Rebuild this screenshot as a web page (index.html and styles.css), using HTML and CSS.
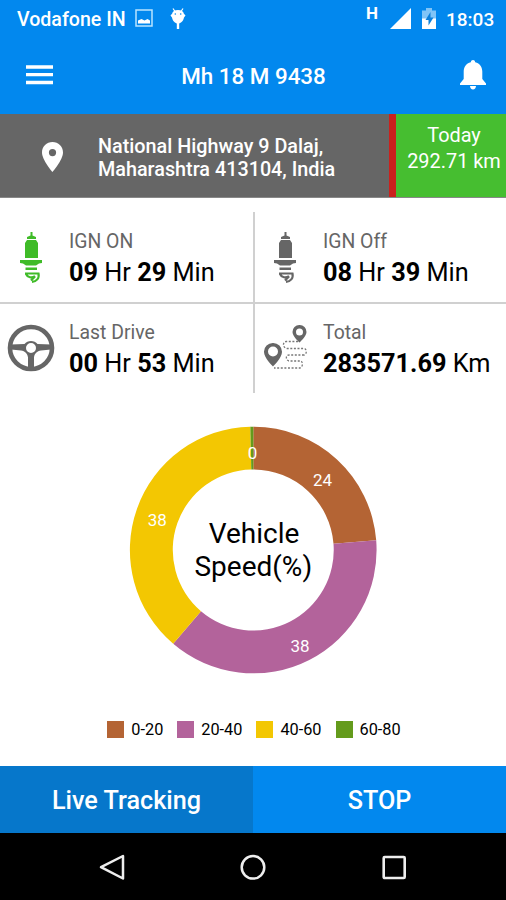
FILE: index.html
```html
<!DOCTYPE html>
<html lang="en">
<head>
<meta charset="utf-8">
<meta name="viewport" content="width=device-width, initial-scale=1">
<title>Mh 18 M 9438</title>
<link rel="stylesheet" href="styles.css">
</head>
<body>
<div class="screen">
  <header class="top">
    <div class="status">
      <span class="carrier">Vodafone IN</span>
      <svg class="ic-picture" width="18" height="18" viewBox="0 0 18 18"><rect x="1" y="1" width="16" height="16" fill="none" stroke="#b9e4ff" stroke-width="1.5"/><path d="M3 14.500V11.500l3.500-1.500 3 1.500 3-1.500 2.500 1.500v3z" fill="#fff"/></svg>
      <svg class="ic-droid" width="16" height="22" viewBox="0 0 16 22"><path d="M3 .5l2 3M13 .5l-2 3" stroke="#fff" stroke-width="1.200"/><path d="M8 2c3.500 0 5.500 1.500 5.900 3.800l1.600 1.700-1.500 2C13.300 13 11 15.500 8 15.500S2.700 13 2 9.500L.5 7.500l1.600-1.700C2.500 3.500 4.500 2 8 2z" fill="#fff"/><path d="M8 15v6" stroke="#fff" stroke-width="2.400"/><circle cx="5.300" cy="6" r=".8" fill="#0288ee"/><circle cx="10.700" cy="6" r=".8" fill="#0288ee"/></svg>
      <span class="network">H</span>
      <svg class="ic-signal" width="21" height="21" viewBox="0 0 21 21"><path d="M21 0v21H0z" fill="#fff"/></svg>
      <svg class="ic-battery" width="14" height="21" viewBox="0 0 14 21"><path d="M4 0h6v2.500h4V11H0V2.500h4z" fill="#80c4f7"/><path d="M0 10.500h14V21H0z" fill="#fff"/><path d="M8.500 4L3.500 12h3v5.500l5-8h-3z" fill="#0b80dc"/></svg>
      <span class="clock">18:03</span>
    </div>
    <div class="appbar">
      <svg class="ic-menu" width="27" height="20" viewBox="0 0 27 20"><path d="M0 2h27M0 9.700h27M0 17.500h27" stroke="#fff" stroke-width="3.300"/></svg>
      <h1>Mh 18 M 9438</h1>
      <svg class="ic-bell" width="26" height="30" viewBox="0 0 26 30"><path d="M13 0c1.200 0 2 .8 2.200 2.200C20 3.500 22.300 7 22.300 11.500V19l3.700 4.500V25H0v-1.500L3.700 19v-7.500C3.700 7 6 3.500 10.800 2.200 11 .8 11.800 0 13 0zM10 26h6c0 2-1.300 3.400-3 3.400S10 28 10 26z" fill="#fff"/></svg>
    </div>
  </header>

  <section class="location">
    <div class="pin"><svg width="21" height="30" viewBox="0 0 21 30"><path fill-rule="evenodd" d="M10.500 0C4.700 0 0 4.600 0 10.500 0 18 10.500 30 10.500 30S21 18 21 10.500C21 4.600 16.300 0 10.500 0zm0 7a3.600 3.600 0 1 1 0 7.200 3.600 3.600 0 0 1 0-7.200z" fill="#fff"/></svg></div>
    <p class="address">National Highway 9 Dalaj,<br>Maharashtra 413104, India</p>
    <div class="today"><span>Today</span><span>292.71 km</span></div>
  </section>

  <section class="stats">
    <article class="stat on">
      <div class="icon"><svg width="24" height="52" viewBox="0 0 24 52"><g fill="currentColor"><path d="M11.500 0h2v3.500l3.500 1.500v2H8V5l3.500-1.500z"/><path d="M8 8h9l2 3v15H6V11z"/><path d="M1 28h22v3l-3 .5-3 2H7l-3-2-3-.5z"/><path d="M6.500 35.500H18V38H6.500z"/></g><path d="M6 41.500h13.500c1 5-2 8-6.500 8.300M7 42c1.500 3.500 6 4.500 9 2M12 48.500l4-4" fill="none" stroke="currentColor" stroke-width="2.200"/></svg></div>
      <div><div class="label">IGN ON</div><div class="value"><b>09</b> Hr <b>29</b> Min</div></div>
    </article>
    <article class="stat off">
      <div class="icon"><svg width="24" height="52" viewBox="0 0 24 52"><g fill="currentColor"><path d="M11.500 0h2v3.500l3.500 1.500v2H8V5l3.500-1.500z"/><path d="M8 8h9l2 3v15H6V11z"/><path d="M1 28h22v3l-3 .5-3 2H7l-3-2-3-.5z"/><path d="M6.500 35.500H18V38H6.500z"/></g><path d="M6 41.500h13.500c1 5-2 8-6.500 8.300M7 42c1.500 3.500 6 4.500 9 2M12 48.500l4-4" fill="none" stroke="currentColor" stroke-width="2.200"/></svg></div>
      <div><div class="label">IGN Off</div><div class="value"><b>08</b> Hr <b>39</b> Min</div></div>
    </article>
    <article class="stat drive">
      <div class="icon"><svg width="48" height="48" viewBox="0 0 48 48"><circle cx="24" cy="24" r="21" fill="none" stroke="#666" stroke-width="4.600"/><path fill-rule="evenodd" d="M4 20.500l13.500-.5c3-4 10-4 13 0l13.500.5v5l-10 1c-4 .5-6.500 3-7 7V45h-6V33.500c-.5-4-3-6.500-7-7L4 25.500zM24 19a5 5 0 1 0 0 10 5 5 0 0 0 0-10z" fill="#666"/></svg></div>
      <div><div class="label">Last Drive</div><div class="value"><b>00</b> Hr <b>53</b> Min</div></div>
    </article>
    <article class="stat total">
      <div class="icon"><svg width="44" height="46" viewBox="0 0 44 46"><g fill="#666" fill-rule="evenodd"><path d="M9 19a8.800 8.800 0 0 0-9 9c0 6 9 14.500 9 14.500S18 34 18 28a8.800 8.800 0 0 0-9-9zm0 3.500a5 5 0 1 1 0 10 5 5 0 0 1 0-10z"/><path d="M35.500 1A6.800 6.800 0 0 0 28.500 8c0 4.500 7 10.500 7 10.500s7-6 7-10.500a6.800 6.800 0 0 0-7-7zm0 3.500a3.500 3.500 0 1 1 0 7 3.500 3.500 0 0 1 0-7z"/></g><path d="M34 17.500H22c-4 1-3 6.500 1 7h17c3 0 3 6 0 6.500M40 31H25c-4 0-3 5.500 0 6h12c2 1 2 6-1 7H10" fill="none" stroke="#777" stroke-width="1.300" stroke-dasharray="2 1.600"/></svg></div>
      <div><div class="label">Total</div><div class="value"><b>283571.69</b> Km</div></div>
    </article>
  </section>

  <section class="chart">
    <svg width="250" height="250" viewBox="128.200 425 250 250">
      <path fill="#b46434" d="M253.500 426.700A123.300 123.300 0 0 1 376.400 540.300L333.700 543.700A80.500 80.500 0 0 0 253.500 469.500z"/>
      <path fill="#b3639b" d="M376.400 540.300A123.300 123.300 0 0 1 173.400 643.800L201.200 611.200A80.500 80.500 0 0 0 333.700 543.700z"/>
      <path fill="#f3c702" d="M173.400 643.800A123.300 123.300 0 0 1 250.500 426.700L251.500 469.500A80.500 80.500 0 0 0 201.200 611.200z"/>
      <path fill="#649b1c" d="M250.500 426.700H253.500V469.500H251.500z"/>
      <g class="slice-label">
        <text x="252.800" y="458.500">0</text>
        <text x="322.800" y="485.500">24</text>
        <text x="300.200" y="652">38</text>
        <text x="157.500" y="526">38</text>
      </g>
      <g class="chart-title">
        <text x="254.200" y="543">Vehicle</text>
        <text x="253.500" y="576">Speed(%)</text>
      </g>
    </svg>
    <ul class="legend">
      <li><i class="c1"></i>0-20</li>
      <li><i class="c2"></i>20-40</li>
      <li><i class="c3"></i>40-60</li>
      <li><i class="c4"></i>60-80</li>
    </ul>
  </section>

  <div class="actions"><button class="live">Live Tracking</button><button class="stop">STOP</button></div>

  <nav class="nav">
    <svg width="28" height="30" viewBox="0 0 28 30"><path d="M25 4v22.500L3 15.200z" fill="none" stroke="#eee" stroke-width="2.500" stroke-linejoin="round"/></svg>
    <svg width="28" height="30" viewBox="0 0 28 30"><circle cx="14" cy="15.300" r="11.300" fill="none" stroke="#eee" stroke-width="2.500"/></svg>
    <svg width="28" height="30" viewBox="0 0 28 30"><rect x="3.700" y="5" width="21" height="21" rx="1" fill="none" stroke="#eee" stroke-width="2.600"/></svg>
  </nav>
</div>
</body>
</html>
```
FILE: styles.css
```css
* { box-sizing: border-box; }
body { margin: 0; background: #fff; font-family: Roboto, "Liberation Sans", sans-serif; }
svg { display: block; flex: none; }
.screen { width: 506px; height: 900px; display: flex; flex-direction: column; overflow: hidden; }

.top { height: 114px; background: #0288ee; color: #fff; flex: none; }
.status { height: 38px; display: flex; align-items: center; padding: 0 11px 0 17px; font-size: 19px; font-weight: 500; white-space: nowrap; }
.carrier { width: 110px; font-size: 19.600px; }
.ic-picture { margin-left: 8px; margin-top: -2px; }
.ic-droid { margin: -1px auto 0 17px; }
.ic-droid + .network { font-size: 17px; font-weight: 700; padding-bottom: 12px; }
.ic-signal { margin-left: 12px; margin-top: -2px; }
.ic-battery { margin: -2px 10px 0 11px; }
.clock { width: 49px; }
.appbar { height: 76px; display: grid; grid-template-columns: 60px 1fr 60px; align-items: center; }
.ic-menu { margin-left: 26px; margin-top: -3px; }
.appbar h1 { margin: 0; text-align: center; font-size: 22.400px; line-height: 26px; font-weight: 500; padding-left: 1px; }
.ic-bell { margin-left: 14px; margin-top: -2px; }

.location { height: 84px; flex: none; display: flex; background: #666; color: #fff; border-bottom: 1px solid #888; }
.pin { width: 98px; padding: 28px 0 0 42px; }
.address { margin: 0; padding-top: 21px; width: 291px; font-size: 19.800px; line-height: 23px; font-weight: 500; white-space: nowrap; }
.today { flex: 1; background: #46be30; border-left: 7px solid #ca211d; display: flex; flex-direction: column; align-items: center; padding: 9px 0 0 6px; font-size: 19.900px; line-height: 26px; white-space: nowrap; }

.stats { height: 195px; flex: none; display: grid; grid-template-columns: 255px 251px; grid-template-rows: 92px 89px; padding-top: 14px; }
.stat { display: flex; }
.stat.on, .stat.drive { border-right: 2px solid #d0d0d0; }
.stat.on, .stat.off { border-bottom: 2px solid #d0d0d0; }
.icon { width: 69px; flex: none; }
.off .icon, .total .icon { width: 68px; }
.on .icon { padding: 20px 0 0 19px; color: #3fbb28; }
.off .icon { padding: 20px 0 0 18px; color: #666; }
.drive .icon { padding: 20px 0 0 7px; }
.total .icon { padding: 20px 0 0 9px; }
.label { padding-top: 17px; font-size: 19.400px; line-height: 24px; color: #666; }
.on .label, .off .label { padding-top: 18px; }
.value { margin-top: 4px; font-size: 25.300px; line-height: 30px; color: #000; white-space: nowrap; }
.value b { font-weight: 700; }

.chart { height: 373px; flex: none; padding-top: 32px; display: flex; flex-direction: column; align-items: center; }
.slice-label { font-size: 17px; fill: #fff; text-anchor: middle; }
.chart-title { font-size: 28px; fill: #000; text-anchor: middle; }
.legend { list-style: none; margin: 44px 0 0 2px; padding: 0; display: flex; gap: 14px; }
.legend li { display: flex; align-items: center; gap: 7px; font-size: 16.300px; line-height: 22px; }
.legend i { width: 17px; height: 17px; margin-top: -1px; }
.c1 { background: #b46434; }
.c2 { background: #b3639b; }
.c3 { background: #f3c702; }
.c4 { background: #649b1c; }

.actions { height: 67px; flex: none; display: grid; grid-template-columns: 1fr 1fr; }
.actions button { border: 0; padding: 2px 0 0; color: #fff; font: 500 25.200px/30px Roboto, "Liberation Sans", sans-serif; }
.live { background: #0677cb; }
.stop { background: #0288ee; }

.nav { flex: 1; background: #000; display: flex; justify-content: center; gap: 113px; align-items: center; }
```
